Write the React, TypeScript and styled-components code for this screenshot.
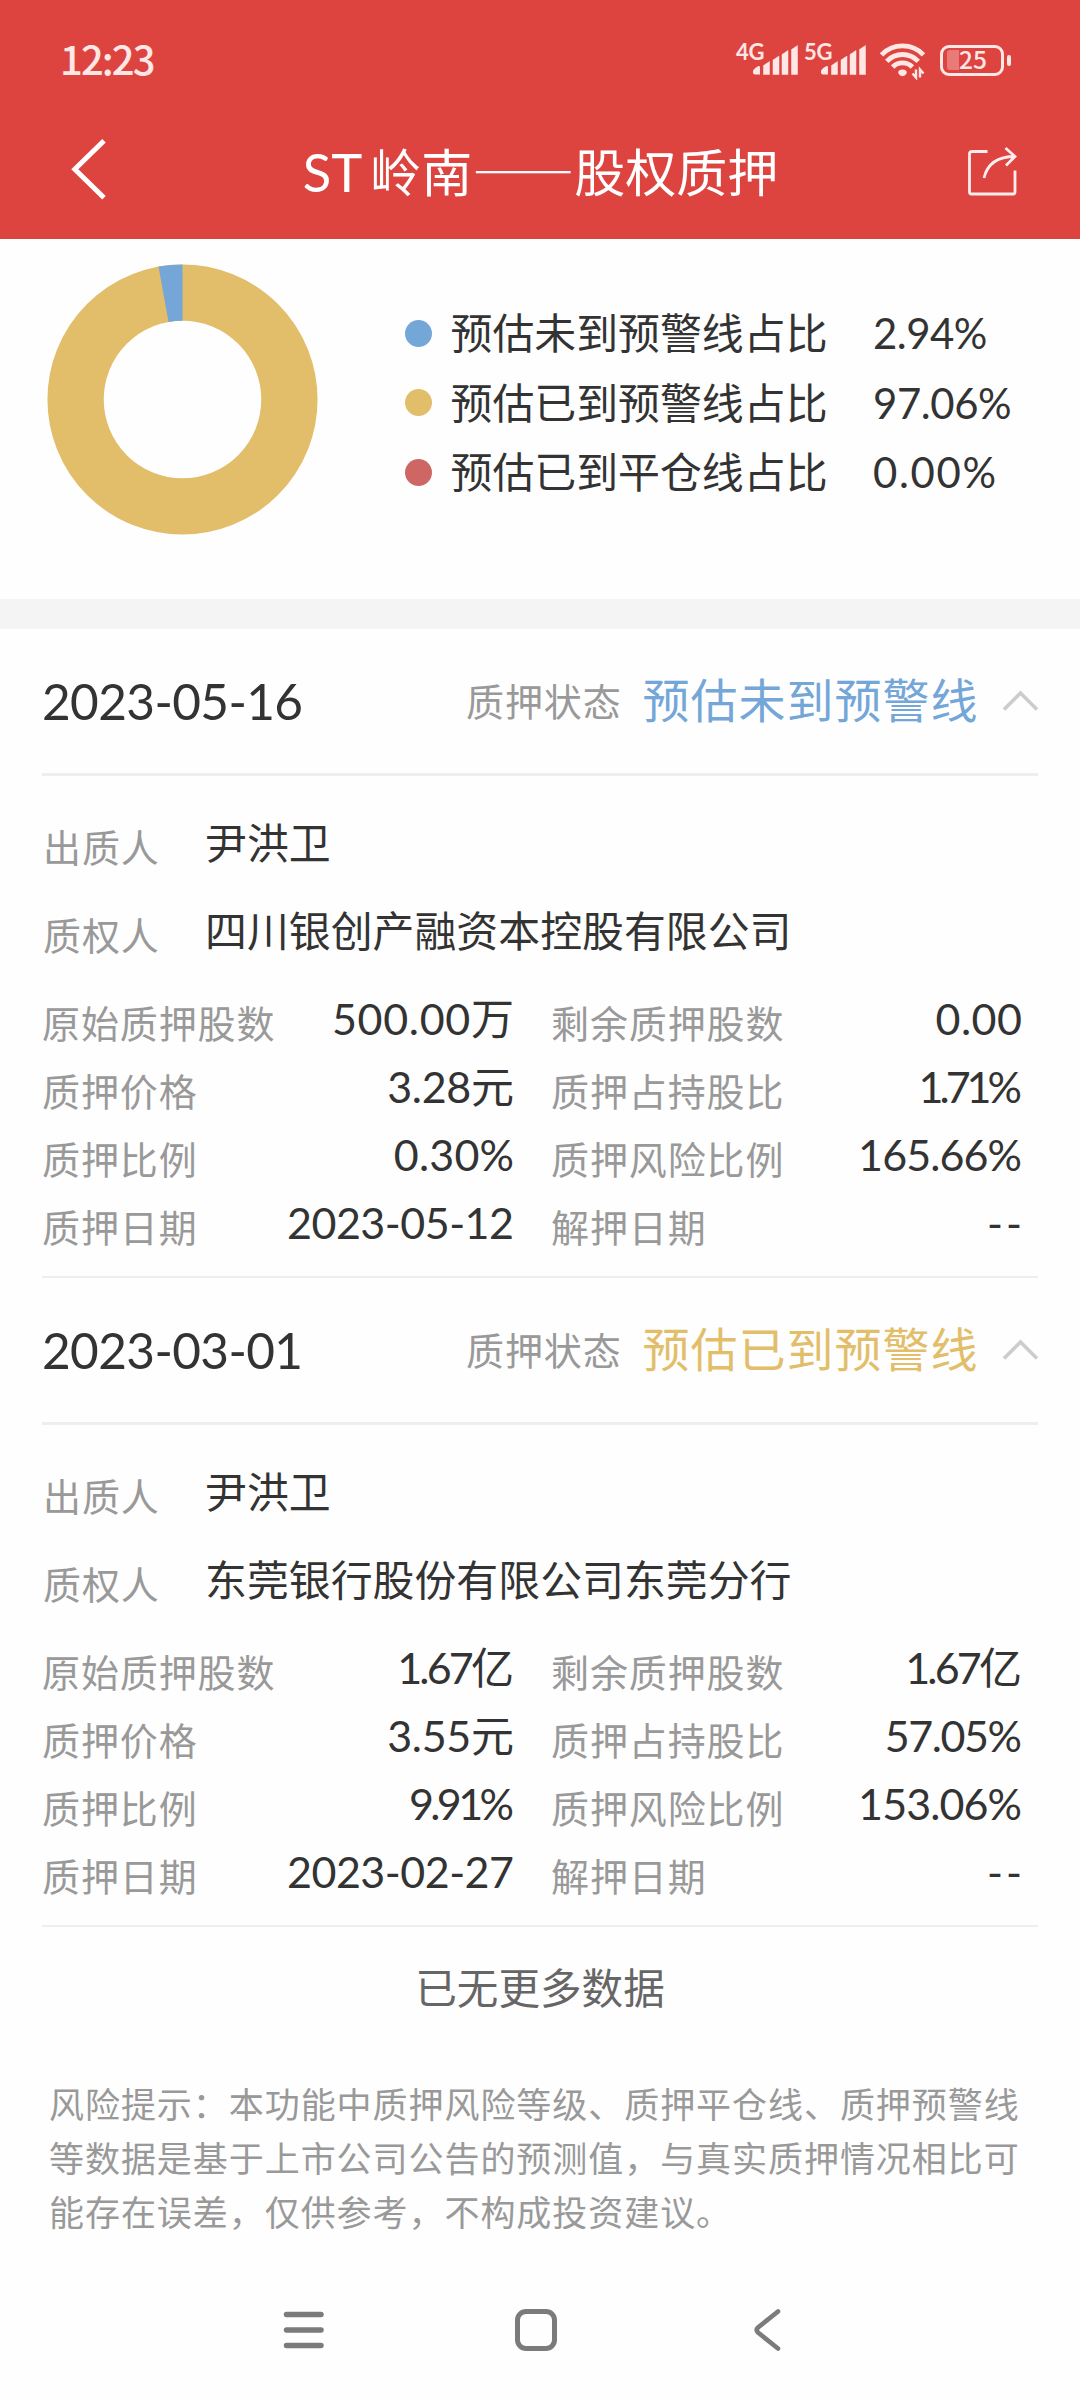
import React from "react";
import styled, { createGlobalStyle } from "styled-components";

const CJK = `"Noto Sans CJK SC", sans-serif`;
const MIXED = `Lato, "Noto Sans CJK SC", sans-serif`;
const BLUE = "#74a6d8";
const GOLD = "#e2be6a";
const RED = "#ce6764";

const GlobalStyle = createGlobalStyle`
  * { box-sizing: border-box; }
  body { margin: 0; background: #fefefe; }
`;

const Screen = styled.div`
  width: 1080px;
  height: 2400px;
  display: flex;
  flex-direction: column;
  background: #fefefe;
  color: #333;
  font-family: ${MIXED};
  white-space: nowrap;
  overflow: hidden;
`;

const Header = styled.header`
  height: 239px;
  flex: none;
  background: #dd4440;
  color: #fff;
`;

const StatusBar = styled.div`
  height: 120px;
  padding: 0 69px 0 60px;
  display: flex;
  justify-content: space-between;
  align-items: center;
  color: #ffe7e6;
`;

const Clock = styled.span`
  font-family: ${CJK};
  font-size: 40px;
  font-weight: 500;
  line-height: 48px;
  letter-spacing: -1.9px;
  padding-bottom: 4px;
`;

const StatusIcons = styled.div`
  display: flex;
  align-items: center;
  height: 40px;
`;

const Signal = styled.div`
  display: flex;
  width: 68px;
  height: 40px;
`;

const Network = styled.span`
  width: 17px;
  font-size: 22px;
  font-weight: 700;
  line-height: 23px;
  letter-spacing: -0.2px;
`;

const WifiSvg = styled.svg`
  margin-left: 5px;
`;

const BatteryBox = styled.div`
  display: flex;
  align-items: center;
  margin-left: 13px;
`;

const BatteryCase = styled.div`
  display: flex;
  align-items: center;
  width: 64px;
  height: 31px;
  border: 3px solid #ffe7e6;
  border-radius: 9px;
  padding-left: 4px;
`;

const BatteryFill = styled.div`
  width: 12px;
  height: 20px;
  border-radius: 3px 0 0 3px;
  background: #e87a77;
`;

const BatteryText = styled.span`
  font-family: ${CJK};
  font-size: 24.5px;
  font-weight: 500;
  line-height: 24px;
  padding-bottom: 2px;
`;

const BatteryNub = styled.div`
  width: 4px;
  height: 11px;
  margin-left: 3px;
  border-radius: 2px;
  background: #ffe7e6;
`;

const TitleBar = styled.div`
  height: 119px;
  padding: 0 63px 18px 70px;
  display: flex;
  justify-content: space-between;
  align-items: center;
`;

const Title = styled.h1`
  margin: 0 0 0 6px;
  display: flex;
  align-items: baseline;
  gap: 8px;
  font-size: 52.5px;
  font-weight: 400;
  line-height: 64px;
`;

const TitleCjk = styled.span`
  font-family: ${CJK};
  font-size: 51px;
`;

const Summary = styled.section`
  height: 360px;
  flex: none;
  padding: 25px 0 0 47px;
  display: flex;
`;

const Legend = styled.div`
  margin: 34.5px 0 0 87px;
`;

const LegendRow = styled.div`
  height: 69.5px;
  display: grid;
  grid-template-columns: 45.5px 422.5px auto;
  align-items: center;
  font-size: 41.9px;
  line-height: 60px;
`;

const Share = styled.span<{ $track: number }>`
  letter-spacing: ${(p) => p.$track}px;
`;

const Dot = styled.i<{ $color: string }>`
  width: 27px;
  height: 27px;
  border-radius: 50%;
  background: ${(p) => p.$color};
`;

const Band = styled.div`
  height: 30px;
  flex: none;
  background: #f4f4f4;
`;

const Record = styled.section`
  margin: 0 42px;
  height: 649px;
  flex: none;
  border-bottom: 2px solid #eee;
`;

const RecordHead = styled.div`
  height: 147px;
  border-bottom: 3px solid #eee;
  display: flex;
  align-items: center;
`;

const RecordDate = styled.span`
  width: 424px;
  font-size: 49.5px;
  letter-spacing: -0.6px;
  line-height: 60px;
`;

const Label = styled.span`
  color: #999;
  font-size: 38px;
  letter-spacing: 0.9px;
  line-height: 50px;
  padding-bottom: 1px;
`;

const Status = styled.span<{ $color: string }>`
  margin-left: 21px;
  flex: 1;
  padding-bottom: 2px;
  color: ${(p) => p.$color};
  font-size: 47px;
  letter-spacing: 1px;
  line-height: 60px;
`;

const People = styled.div`
  padding: 27px 0 10px 1px;
`;

const PersonRow = styled.div`
  height: 88px;
  display: grid;
  grid-template-columns: 162px auto;
  align-items: center;
`;

const Value = styled.span`
  font-size: 41.9px;
  line-height: 50px;
  padding-bottom: 8px;
`;

const Facts = styled.div`
  display: grid;
  grid-template-columns: 472px 471px;
  column-gap: 37px;
`;

const Fact = styled.div`
  height: 68px;
  display: flex;
  justify-content: space-between;
  align-items: center;
`;

const Amount = styled(Value)<{ $track: number }>`
  font-size: 43px;
  padding-bottom: 8px;
  letter-spacing: ${(p) => p.$track}px;
  margin-right: ${(p) => -p.$track}px;
`;

const Footer = styled.footer`
  display: flex;
  flex-direction: column;
  height: 340px;
  flex: none;
`;

const NoMore = styled.p`
  margin: 31px 0 0;
  text-align: center;
  color: #666;
  font-size: 41.6px;
  line-height: 60px;
`;

const Notice = styled.p`
  margin: 59px 0 0 49px;
  color: #999;
  font-size: 35px;
  letter-spacing: 0.95px;
  line-height: 54px;
`;

const NavBar = styled.nav`
  margin-top: auto;
  height: 142px;
  flex: none;
  padding: 0 0 17px 282px;
  display: grid;
  grid-template-columns: 231.5px 238.5px auto;
  align-items: center;
`;

const legend = [
  { color: BLUE, name: "预估未到预警线占比", share: 2.94, track: -0.5 },
  { color: GOLD, name: "预估已到预警线占比", share: 97.06, track: -0.4 },
  { color: RED, name: "预估已到平仓线占比", share: 0, track: 1.7 },
];

type FactRow = [name: string, value: string, track: number];

const records: {
  date: string;
  status: string;
  color: string;
  pledgor: string;
  pledgee: string;
  facts: FactRow[];
}[] = [
  {
    date: "2023-05-16",
    status: "预估未到预警线",
    color: BLUE,
    pledgor: "尹洪卫",
    pledgee: "四川银创产融资本控股有限公司",
    facts: [
      ["原始质押股数", "500.00万", 0.7],
      ["剩余质押股数", "0.00", 0.5],
      ["质押价格", "3.28元", -0.3],
      ["质押占持股比", "1.71%", -4],
      ["质押比例", "0.30%", 0.2],
      ["质押风险比例", "165.66%", -0.9],
      ["质押日期", "2023-05-12", -0.5],
      ["解押日期", "--", 3],
    ],
  },
  {
    date: "2023-03-01",
    status: "预估已到预警线",
    color: GOLD,
    pledgor: "尹洪卫",
    pledgee: "东莞银行股份有限公司东莞分行",
    facts: [
      ["原始质押股数", "1.67亿", -2.8],
      ["剩余质押股数", "1.67亿", -2.8],
      ["质押价格", "3.55元", -0.3],
      ["质押占持股比", "57.05%", -1.4],
      ["质押比例", "9.91%", -3.6],
      ["质押风险比例", "153.06%", -0.9],
      ["质押日期", "2023-02-27", -0.5],
      ["解押日期", "--", 3],
    ],
  },
];

function SignalBars() {
  return (
    <svg width="46" height="40" viewBox="0 0 46 40" fill="#ffe7e6">
      <path d="M0 31q0-1.500 3-3.500l2-1.200q2-.8 2 1V34.500H2q-2 0-2-2z" />
      <path d="M10.500 25.500l6-4V34.500h-6z M20 20l6-4V34.500h-6z M29 14.500l6-4V34.500h-6z M38.500 9.500l6-4V34.500h-6z" stroke="#ffe7e6" strokeWidth=".5" strokeLinejoin="round" />
    </svg>
  );
}

function WifiIcon() {
  return (
    <WifiSvg width="50" height="40" viewBox="0 0 50 40" fill="none" stroke="#ffe7e6" strokeWidth="4.800">
      <path d="M4.500 14.800a29 29 0 0 1 42 0" />
      <path d="M9.800 21.300a21.500 21.500 0 0 1 31.400 0" />
      <path d="M15.600 27a13.800 13.800 0 0 1 19.800 0" />
      <path d="M25.500 29.500c2.500 0 4.300 1.200 4.300 2.800 0 1.800-2.300 3.900-4.300 3.900s-4.300-2.100-4.300-3.900c0-1.600 1.800-2.800 4.300-2.800z" fill="#ffe7e6" stroke="none" />
      <path d="M39 29.500v8l-3.500-4M43 37.500v-8l3.500 4" strokeWidth="2.400" />
    </WifiSvg>
  );
}

function Donut() {
  const c = 2 * Math.PI * 106.9;
  const blue = (legend[0].share / 100) * c;
  return (
    <svg width="271" height="271" viewBox="-135.500 -135.500 271 271" fill="none" strokeWidth="56.300">
      <circle r="106.900" stroke={GOLD} />
      <circle r="106.900" stroke={BLUE} strokeDasharray={`${blue} ${c - blue}`} strokeDashoffset={blue} transform="rotate(-90)" />
    </svg>
  );
}

export default function App() {
  return (
    <Screen lang="zh-CN">
      <GlobalStyle />
      <Header>
        <StatusBar>
          <Clock>12:23</Clock>
          <StatusIcons>
            <Signal><Network>4G</Network><SignalBars /></Signal>
            <Signal><Network>5G</Network><SignalBars /></Signal>
            <WifiIcon />
            <BatteryBox>
              <BatteryCase><BatteryFill /><BatteryText>25</BatteryText></BatteryCase>
              <BatteryNub />
            </BatteryBox>
          </StatusIcons>
        </StatusBar>
        <TitleBar>
          <svg width="38" height="64" viewBox="0 0 38 64" fill="none" stroke="#fff" strokeWidth="5">
            <path d="M34 1.800L4.800 30.300 34 58.800" />
          </svg>
          <Title>ST<TitleCjk>岭南——股权质押</TitleCjk></Title>
          <svg width="50" height="54" viewBox="0 -3 50 54" fill="none" stroke="#ffecec" strokeWidth="2.800">
            <path d="M20.500 4.500H5.500Q2.500 4.500 2.500 6.500V45Q2.500 47 4.500 47H46Q48 47 48 45V23.500" />
            <path d="M17 31C20 18 29 9.500 48 9.500M38.500 1L48 9.500l-9 9" />
          </svg>
        </TitleBar>
      </Header>

      <Summary>
        <Donut />
        <Legend>
          {legend.map((l) => (
            <LegendRow key={l.name}>
              <Dot $color={l.color} />
              <span>{l.name}</span>
              <Share $track={l.track}>{`${l.share.toFixed(2)}%`}</Share>
            </LegendRow>
          ))}
        </Legend>
      </Summary>
      <Band />

      {records.map((r) => (
        <Record key={r.date}>
          <RecordHead>
            <RecordDate>{r.date}</RecordDate>
            <Label>质押状态</Label>
            <Status $color={r.color}>{r.status}</Status>
            <svg width="36" height="22" viewBox="0 0 36 22" fill="none" stroke="#ccc" strokeWidth="3.600">
              <path d="M2 19.500L18.500 3 35 19.500" />
            </svg>
          </RecordHead>
          <People>
            <PersonRow><Label>出质人</Label><Value>{r.pledgor}</Value></PersonRow>
            <PersonRow><Label>质权人</Label><Value>{r.pledgee}</Value></PersonRow>
          </People>
          <Facts>
            {r.facts.map(([name, value, track]) => (
              <Fact key={name}><Label>{name}</Label><Amount $track={track}>{value}</Amount></Fact>
            ))}
          </Facts>
        </Record>
      ))}

      <Footer>
        <NoMore>已无更多数据</NoMore>
        <Notice>
          风险提示：本功能中质押风险等级、质押平仓线、质押预警线<br />
          等数据是基于上市公司公告的预测值，与真实质押情况相比可<br />
          能存在误差，仅供参考，不构成投资建议。
        </Notice>
      </Footer>
      <NavBar>
        <svg width="44" height="44" viewBox="0 0 44 44" stroke="#7b7b7b" strokeWidth="5.500" strokeLinecap="round">
          <path d="M4.500 6.500H39M4.500 22H39M4.500 37.500H39" />
        </svg>
        <svg width="44" height="44" viewBox="0 0 44 44" fill="none" stroke="#7b7b7b" strokeWidth="5">
          <rect x="3.500" y="3.500" width="37" height="37" rx="8.500" />
        </svg>
        <svg width="30" height="44" viewBox="0 0 30 44" fill="none" stroke="#7b7b7b" strokeWidth="4.600" strokeLinecap="round" strokeLinejoin="round">
          <path d="M26 3.500L6 19.500Q3.500 22 6 24.500L26 40.500" />
        </svg>
      </NavBar>
    </Screen>
  );
}
